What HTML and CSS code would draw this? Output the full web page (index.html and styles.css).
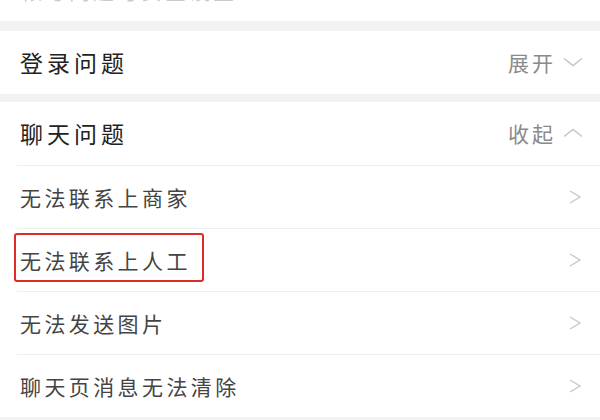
FILE: index.html
```html
<!DOCTYPE html>
<html lang="zh">
<head>
<meta charset="utf-8">
<link rel="stylesheet" href="styles.css">
</head>
<body>
<div class="page">
  <div class="top-cut"><span class="cut-text">帐号问题与安全设置</span></div>
  <div class="band band-a"></div>
  <section class="group">
    <div class="head">
      <span class="title">登录问题</span>
      <span class="toggle">展开
        <svg class="caret" width="20" height="10" viewBox="0 0 20 10"><path d="M1 1.5 L10 8.5 L19 1.5" fill="none" stroke="#c4c4c4" stroke-width="1.4"/></svg>
      </span>
    </div>
  </section>
  <div class="band band-b"></div>
  <section class="group">
    <div class="head">
      <span class="title">聊天问题</span>
      <span class="toggle">收起
        <svg class="caret" width="20" height="10" viewBox="0 0 20 10"><path d="M1 8.5 L10 1.5 L19 8.5" fill="none" stroke="#c4c4c4" stroke-width="1.4"/></svg>
      </span>
    </div>
    <ul class="list">
      <li class="item"><span class="label">无法联系上商家</span><svg class="arrow" width="14" height="14" viewBox="0 0 14 14"><path d="M2 1 L12 7 L2 13" fill="none" stroke="#c8c8c8" stroke-width="1.4"/></svg></li>
      <li class="item"><span class="label marked">无法联系上人工</span><svg class="arrow" width="14" height="14" viewBox="0 0 14 14"><path d="M2 1 L12 7 L2 13" fill="none" stroke="#c8c8c8" stroke-width="1.4"/></svg></li>
      <li class="item"><span class="label">无法发送图片</span><svg class="arrow" width="14" height="14" viewBox="0 0 14 14"><path d="M2 1 L12 7 L2 13" fill="none" stroke="#c8c8c8" stroke-width="1.4"/></svg></li>
      <li class="item"><span class="label">聊天页消息无法清除</span><svg class="arrow" width="14" height="14" viewBox="0 0 14 14"><path d="M2 1 L12 7 L2 13" fill="none" stroke="#c8c8c8" stroke-width="1.4"/></svg></li>
    </ul>
  </section>
  <div class="band band-c"></div>
</div>
</body>
</html>
```

FILE: styles.css
```css
html, body {
  margin: 0;
  padding: 0;
  background: #ffffff;
}
body {
  font-family: "Noto Sans CJK SC", "Noto Sans", sans-serif;
  width: 600px;
  height: 420px;
  overflow: hidden;
}
.page {
  display: flex;
  flex-direction: column;
}
.top-cut {
  height: 21px;
  overflow: hidden;
  background: #fff;
  padding-left: 21px;
  box-sizing: border-box;
}
.cut-text {
  display: block;
  font-size: 21px;
  letter-spacing: 3px;
  line-height: 20px;
  margin-top: -20px;
  color: #555;
  opacity: 0.3;
}
.band {
  background: #f2f2f2;
}
.band-a { height: 10px; }
.band-b { height: 8px; }
.band-c { height: 10px; }
.group {
  background: #fff;
}
.head {
  height: 63px;
  box-sizing: border-box;
  display: flex;
  align-items: center;
  justify-content: space-between;
  padding: 0 17px 2px 20px;
}
.title {
  font-size: 23px;
  letter-spacing: 4px;
  color: #222;
}
.toggle {
  display: flex;
  align-items: center;
  gap: 7px;
  font-size: 21px;
  letter-spacing: 3px;
  color: #8a8a8a;
}
.caret {
  display: block;
}
.list {
  list-style: none;
  margin: 0;
  padding: 0;
}
.item {
  height: 62px;
  display: flex;
  align-items: center;
  justify-content: space-between;
  padding-right: 18px;
  margin-left: 17px;
  border-top: 1px solid #eeeeee;
}
.label {
  font-size: 21px;
  letter-spacing: 3.4px;
  color: #444;
  margin-left: 3px;
  position: relative;
}
.marked::after {
  content: "";
  position: absolute;
  left: -6px;
  top: -12px;
  width: 186px;
  height: 45px;
  border: 2px solid #e02a2a;
  border-radius: 3px;
}
.arrow {
  display: block;
}
```
